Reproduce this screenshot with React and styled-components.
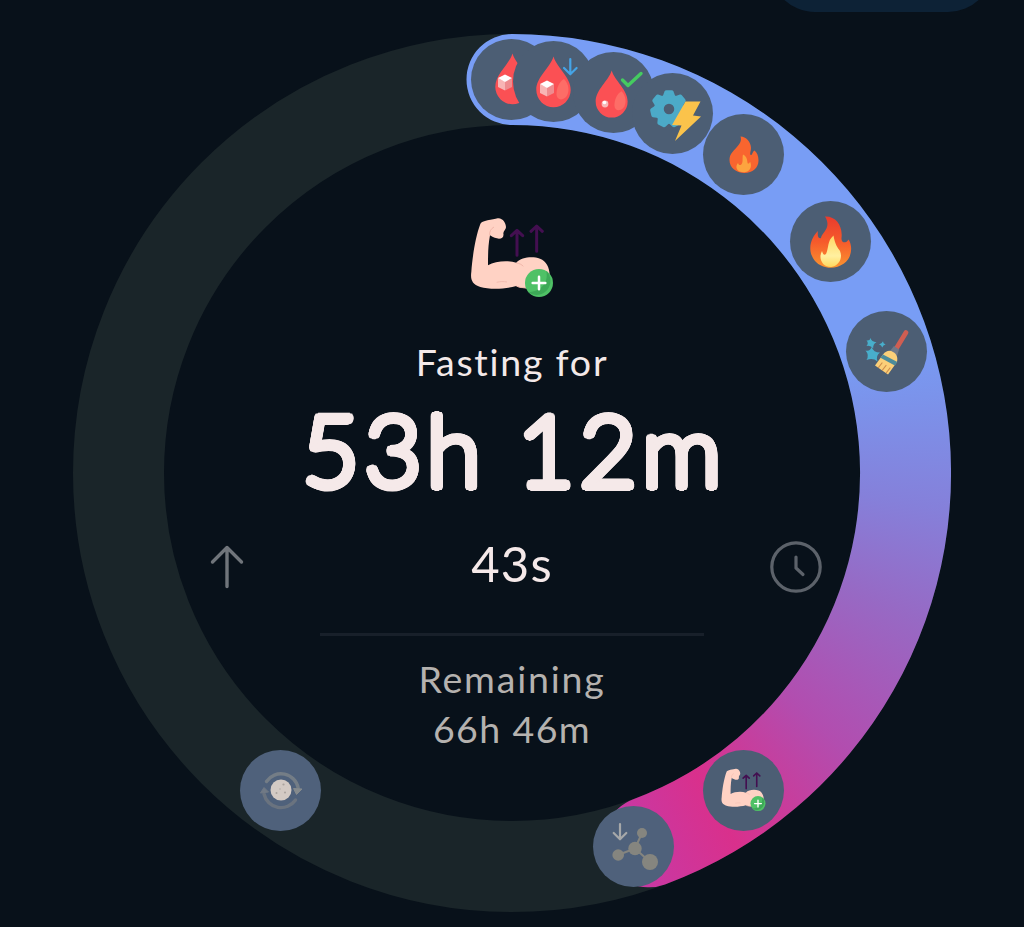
import React from "react";
import styled, { createGlobalStyle } from "styled-components";

const GlobalStyle = createGlobalStyle`
  * { box-sizing: border-box; }
  body { margin: 0; background: #08111a; }
`;

const Screen = styled.main`
  width: 1024px;
  height: 927px;
  overflow: hidden;
  background: #08111a;
  font-family: Lato, "Open Sans", sans-serif;
`;

const Header = styled.header`
  height: 12px;
  display: flex;
  justify-content: flex-end;
  align-items: flex-end;
  padding-right: 31px;
`;

const HeaderPill = styled.div`
  width: 223px;
  height: 90px;
  flex: none;
  border-radius: 45px;
  background: #0d2236;
`;

const Dial = styled.section`
  position: relative;
  width: 878px;
  height: 878px;
  margin: 22px auto 0;
  border-radius: 50%;
  border: 91px solid #1a2529;
`;

const Progress = styled.div`
  position: absolute;
  inset: -91px;
  background: conic-gradient(
    from 0deg at 439px 406px,
    #789df5 0deg, #789df5 76deg, #7b93eb 84deg, #8580da 99deg,
    #9769c4 114deg, #b24daf 133deg, #d9308c 151deg, #c53aa8 166deg,
    #c53aa8 270deg, #789df5 300deg
  );
  clip-path: path("M439 0 A439 439 0 0 1 592 850.5 A45.5 45.5 0 0 1 560.3 765.2 A348 348 0 0 0 439 91 A45.5 45.5 0 0 1 439 0 Z");
`;

const Marker = styled.div`
  position: absolute;
  left: ${(p) => p.$x - 40.5 - 164}px;
  top: ${(p) => p.$y - 40.5 - 125}px;
  width: 81px;
  height: 81px;
  border-radius: 50%;
  background: ${(p) => (p.$upcoming ? "#4f617b" : "#4c5e74")};
`;

const Icon = styled.svg`
  display: block;
  width: ${(p) => p.$w}px;
  height: ${(p) => p.$h}px;
  flex: none;
`;

const Content = styled.div`
  display: flex;
  flex-direction: column;
  align-items: center;
  padding-top: 75px;
`;

const Label = styled.div`
  margin-top: ${(p) => p.$gap || 0}px;
  height: 50px;
  line-height: 50px;
  font-size: 37.5px;
  letter-spacing: ${(p) => p.$spacing}px;
  white-space: pre;
  color: ${(p) => (p.$muted ? "#b5b2af" : "#f3e9e9")};
`;

const roundOutline = (radius, color) =>
  [radius, radius / 2]
    .flatMap((r) =>
      Array.from({ length: 24 }, (_, i) => {
        const a = (i * Math.PI) / 12;
        return `${(r * Math.cos(a)).toFixed(2)}px ${(r * Math.sin(a)).toFixed(2)}px ${color}`;
      })
    )
    .join(", ");

const ElapsedTime = styled.div`
  height: 130px;
  line-height: 124px;
  font-size: 99.5px;
  font-weight: 300;
  letter-spacing: 4.5px;
  padding-left: 4px;
  white-space: pre;
  color: #f5e9e9;
  text-shadow: ${roundOutline(3.6, "#f5e9e9")};
`;

const SecondsRow = styled.div`
  display: grid;
  grid-template-columns: 1fr auto 1fr;
  align-items: center;
  width: 612px;
  height: 60px;
  margin: 16px 0 0 8px;
`;

const Seconds = styled.div`
  font-size: 49px;
  line-height: 60px;
  letter-spacing: 1.2px;
  color: #f5e9e9;
  margin-right: 8px;
  padding-bottom: 7px;
`;

const ClockSlot = styled.div`
  display: flex;
  justify-content: flex-end;
`;

const Divider = styled.hr`
  width: 384px;
  height: 3px;
  margin: 40px 0 0;
  border: 0;
  background: #18202a;
`;

const Line = styled.path`
  fill: none;
  stroke: ${(p) => p.$c};
  stroke-width: ${(p) => p.$w};
  stroke-linecap: round;
  stroke-linejoin: round;
`;

function Drop({ transform }) {
  return (
    <g transform={transform}>
      <path d="M40.5 15.5 C44 27 57.7 36 57.7 49 A17.2 17.2 0 0 1 23.3 49 C23.3 36 37 27 40.5 15.5Z" fill="#fb5054" />
      <path d="M51 38 C46 41 43.5 47 43.5 53 C43.5 59 49 60 53 56 C57 51 56 43 51 38Z" fill="#fd6d67" />
    </g>
  );
}

function Cube() {
  return (
    <g>
      <path d="M27 43 L34 46.5 L34 55.5 L27 52Z" fill="#f8b5b5" />
      <path d="M34 46.5 L41 43 L41 52 L34 55.5Z" fill="#ee8c8f" />
      <path d="M27 43 L34 39.4 L41 43 L34 47Z" fill="#fff" />
    </g>
  );
}

function ArmShape() {
  return (
    <g>
      <Line d="M201 166 V96 M184 107 L201 91 L218 107 M260 154 V83 M243 94 L260 78 L277 94" $c="#430f50" $w={9} />
      <path
        d="M91 72 C94 62 129 59 143 55 C158 53 168 70 168 82 C168 88 160 94 160 100 C164 119 142 121 120 106 C114 137 114 168 114 196 C135 183 174 180 199 188 C214 172 246 168 270 176 C292 184 302 211 298 235 C291 267 230 273 199 258 C166 268 118 269 91 261 C65 252 61 237 64 215 C67 173 76 111 91 72Z"
        fill="#ffd2c4"
      />
      <path d="M199 189 C207 190 215 193 220 199 M199 258 C211 264 221 264 230 261 M119 106 C118 94 123 86 132 81" fill="none" stroke="#f1b7aa" strokeWidth="3" />
      <path d="M140 247 C151 244 160 244 171 246" fill="none" stroke="#f3bdb0" strokeWidth="3" />
      <circle cx="267" cy="249" r="42" fill="#4fc166" />
      <path d="M289 213 A42 42 0 0 1 235 277 C274 274 296 249 289 213Z" fill="#3da957" />
      <Line d="M267 230 V268 M248 249 H286" $c="#fff" $w={7.5} />
    </g>
  );
}

function GearBolt() {
  return (
    <g>
      <g fill="#4caac8">
        {[0, 51.4, 102.9, 154.3, 205.7, 257.1, 308.6].map((a) => (
          <path key={a} d="M30.5 24 L32.5 18.5 Q33 17.3 34.5 17.3 H39.5 Q41 17.3 41.5 18.5 L43.5 24Z" transform={`rotate(${a} 37 36)`} />
        ))}
      </g>
      <circle cx="37" cy="36" r="10" fill="none" stroke="#4caac8" strokeWidth="9.5" />
      <path d="M53.5 28.5 H68.5 L61 42.5 L69 43.5 L43 68 L49.5 52.5 L40 52Z" fill="#fbc34b" />
    </g>
  );
}

function SmallFlame() {
  return (
    <g>
      <path d="M37.5 22.5 C43 22.5 48 28 48 34 C48 37 46.5 39.5 47.5 41 C49.5 41.5 49.5 37.5 51.5 36.5 C54 38.5 55.5 42 55.5 46.5 C55.5 54 49.5 59 41.5 59 C33 59 26.5 53.5 26.5 46 C26.5 40 30 37.5 33.5 33.5 C36.5 30 39 27 37.5 22.5Z" fill="#f9652f" />
      <path d="M40 40.5 C45 43 44 48 44.8 49.5 C46.3 50 46.3 48.3 47.3 48 C49.5 54 46 58 41 58.3 C34 58.3 31.5 53 35 49 C36 51.5 37 51.5 38.3 50.5 C40.5 48 39 44 40 40.5Z" fill="#fda43f" />
    </g>
  );
}

function BigFlame() {
  return (
    <g>
      <defs>
        <linearGradient id="flame" x1="0" y1="0" x2="0" y2="1">
          <stop offset="0" stopColor="#e93b2e" />
          <stop offset=".5" stopColor="#f65b2b" />
          <stop offset="1" stopColor="#fb9430" />
        </linearGradient>
        <linearGradient id="core" x1="0" y1="0" x2="0" y2="1">
          <stop offset="0" stopColor="#ffd763" />
          <stop offset=".65" stopColor="#fff0a0" />
          <stop offset="1" stopColor="#ffd95e" />
        </linearGradient>
      </defs>
      <path d="M35 15.5 C46 15 53 25 51.5 37 C51 42 56 43 58.5 38.5 C63 45 62 57 54 62.5 C45 69 32 68 25 60 C17 50 20 38 28 30 C27 36 29 38 31 37 C32 31 42 27 35 15.5Z" fill="url(#flame)" />
      <path d="M43.5 34.5 C45 44 48 47 50 50 C53 57 49 65 41 66 C32 66 28 57 32 50 C33 53 34 55 36 53 C39 47 37 40 43.5 34.5Z" fill="url(#core)" />
    </g>
  );
}

function Broom() {
  return (
    <g>
      <Line d="M60 21.5 L50 38" $c="#cf5e52" $w={4.8} />
      <path d="M48 35 L53 38.5 L51 45 L43.5 40.5Z" fill="#6f7889" />
      <path d="M37 43.5 C40 39.5 44 39 47 41 C51 43 52 47 51 51 L42 63.5 L29 54.5Z" fill="#fbcf79" />
      <path d="M37 43.5 L51.4 51 L48.8 54.5 L34.5 46.7Z" fill="#4c8c9b" />
      <Line d="M36 52 L32.5 56.5 M40 54.5 L36.5 59 M44 57 L40.5 61.5" $c="#cf8d4a" $w={1.2} />
      <g fill="#48aecb">
        <path d="M24.5 27 Q25.5 31 30.5 31.2 Q26.8 33 27.2 37.5 Q24.5 34 20.5 35 Q23 32 20.5 29.5 Q24 30 24.5 27Z" />
        <path d="M37 30.3 Q37 32.6 39.6 33.4 Q37 34 36.3 36.6 Q35.4 34 33 33.4 Q35.8 33 37 30.3Z" />
        <path d="M25.5 36 Q27.5 41.5 34 41.5 Q29.5 44.5 31.5 50.5 Q27 46.5 20.5 49 Q23.5 44 19.5 39.5 Q24.5 40.5 25.5 36Z" />
      </g>
    </g>
  );
}

function Molecule() {
  return (
    <g>
      <Line d="M27 18 V33 M20.7 27 L27 33.3 L33.3 27" $c="#a6a8a9" $w={2.2} />
      <Line d="M25 49 L42 42.5 L49 27 M42 42.5 L57 56" $c="#85857f" $w={2} />
      <g fill="#85857f">
        <circle cx="42" cy="42.5" r="6.7" />
        <circle cx="49" cy="27" r="5" />
        <circle cx="25.2" cy="49" r="5.8" />
        <circle cx="57" cy="56" r="8" />
      </g>
    </g>
  );
}

function CellCycle() {
  return (
    <g>
      <Line d="M26.5 31.5 A17.5 17.5 0 0 1 58.2 38" $c="#747d86" $w={3.4} />
      <Line d="M55.5 50 A17.5 17.5 0 0 1 24 44" $c="#6a737f" $w={3.4} />
      <path d="M53.5 38.5 L62 39 L56.5 44.5Z" fill="#858a8d" stroke="#858a8d" strokeLinejoin="round" />
      <path d="M20.5 43 L28.5 42 L24 37.5Z" fill="#707985" stroke="#707985" strokeLinejoin="round" />
      <circle cx="41" cy="40" r="10.5" fill="#d3cac4" />
      <g fill="#aaa39e">
        <circle cx="36.5" cy="43" r="1" />
        <circle cx="43.5" cy="34.5" r="1.1" />
        <circle cx="45" cy="42.5" r="1" />
        <circle cx="40" cy="39" r=".7" />
      </g>
    </g>
  );
}

const stages = [
  { x: 511.5, y: 79.5, art: <><Drop transform="translate(1 -1)" /><g transform="translate(0 -4)"><Cube /></g></> },
  { x: 553.5, y: 81.5, art: <><Drop /><Cube /><Line d="M57.3 18 V32 M51 27 L57.3 33.3 L63.6 27" $c="#45a4e6" $w={2.2} /></> },
  {
    x: 613.5, y: 92.5,
    art: (
      <>
        <Drop transform="translate(1 4) scale(.93)" />
        <circle cx="32" cy="52" r="3.4" fill="#f8b9b9" />
        <circle cx="31.5" cy="50.5" r="1.8" fill="#fff" />
        <Line d="M49.5 28 L55 33.5 L68 21.5" $c="#45cb60" $w={3.4} />
      </>
    ),
  },
  { x: 672.5, y: 113.5, art: <GearBolt /> },
  { x: 743.5, y: 154.5, art: <SmallFlame /> },
  { x: 830.5, y: 241.5, art: <BigFlame /> },
  { x: 886.5, y: 351.5, art: <Broom /> },
  { x: 743.5, y: 790.5, art: <g transform="translate(7.2 9) scale(.179)"><ArmShape /></g> },
  { x: 633.5, y: 846.5, upcoming: true, art: <Molecule /> },
  { x: 280.5, y: 790.5, upcoming: true, art: <CellCycle /> },
];

export default function App() {
  return (
    <Screen>
      <GlobalStyle />
      <Header>
        <HeaderPill />
      </Header>
      <Dial>
        <Progress />
        {stages.map((s) => (
          <Marker key={`${s.x}-${s.y}`} $x={s.x} $y={s.y} $upcoming={s.upcoming}>
            <Icon $w={81} $h={81} viewBox="0 0 81 81">{s.art}</Icon>
          </Marker>
        ))}
        <Content>
          <Icon $w={130} $h={110} viewBox="-9 0 390 330"><ArmShape /></Icon>
          <Label $gap={27} $spacing={1.75}>Fasting for</Label>
          <ElapsedTime>53h 12m</ElapsedTime>
          <SecondsRow>
            <Icon $w={34} $h={44} viewBox="0 0 34 44">
              <Line d="M17 41.5 V3 M2.5 17 L17 2.5 L31.5 17" $c="#70757b" $w={3.4} />
            </Icon>
            <Seconds>43s</Seconds>
            <ClockSlot>
              <Icon $w={52} $h={52} viewBox="0 0 52 52">
                <circle cx="26" cy="26" r="24.2" fill="none" stroke="#5c626a" strokeWidth="3.2" />
                <Line d="M26 16 V27 L33 33.5" $c="#5c626a" $w={3.2} />
              </Icon>
            </ClockSlot>
          </SecondsRow>
          <Divider />
          <Label $muted $gap={18} $spacing={1.8}>Remaining</Label>
          <Label $muted $spacing={1.4}>66h 46m</Label>
        </Content>
      </Dial>
    </Screen>
  );
}
